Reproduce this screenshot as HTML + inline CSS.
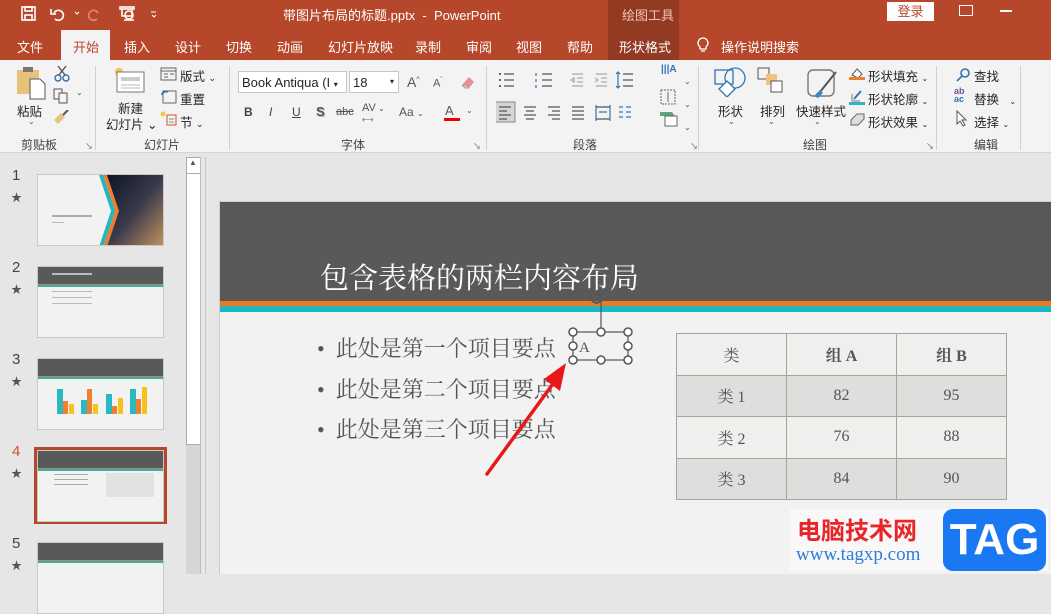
<!DOCTYPE html>
<html><head><meta charset="utf-8">
<style>
*{margin:0;padding:0;box-sizing:border-box}
body{width:1051px;height:574px;overflow:hidden;background:#E6E6E6;font-family:"Liberation Sans","Microsoft YaHei","Noto Sans CJK SC",sans-serif;position:relative;font-size:12px;color:#262626}
.a{position:absolute;white-space:nowrap}
.w{color:#fff}
.tab{position:absolute;top:37px;font-size:13px;color:#fff}
.rb{color:#262626;font-size:12.5px}
.gl{position:absolute;top:136px;font-size:12px;color:#444}
.sep{position:absolute;top:66px;width:1px;height:84px;background:#D0D0D0}
.ic{position:absolute}
.thumb{position:absolute;left:37px;width:127px;height:72px;background:#F2F2F2;border:1px solid #C8C8C8;overflow:hidden}
.th{position:absolute;left:0;top:0;width:100%;height:17px;background:#595959}
.to{position:absolute;left:0;top:17px;width:100%;height:1px;background:#E07A2C}
.tt{position:absolute;left:0;top:18px;width:100%;height:2px;background:#23B6C0}
.num{position:absolute;left:12px;font-size:15px;color:#444}
.star{position:absolute;left:11px;font-size:11px;color:#555}
table{border-collapse:collapse}
td{border:1px solid #A5A5A0;width:110px;height:41.5px;text-align:center;font-family:"Liberation Serif","Noto Serif CJK SC",serif;font-size:16px;color:#555}
</style></head><body>
<div class="a" style="left:0;top:0;width:1051px;height:60px;background:#B7472A"></div>
<div class="a" style="left:608px;top:0;width:71px;height:60px;background:#923A22"></div>
<div class="a" style="left:61px;top:30px;width:49px;height:30px;background:#F3F3F3"></div>
<svg class="ic" style="left:20px;top:5px" width="150" height="18" viewBox="0 0 150 18" fill="none" stroke="#fff" stroke-width="1.6">
<rect x="2" y="2" width="13" height="13"/><rect x="5" y="2" width="7" height="4"/><rect x="5" y="10" width="7" height="5"/>
<path d="M34 8a5 5 0 1 1 1 6"/><path d="M31 4v5h5"/><path d="M55 7l2 2 2-2" stroke-width="1"/>
<path d="M78 8a5 5 0 1 0 -1 6" stroke="#D98A72"/>
<rect x="100" y="2" width="14" height="2"/><path d="M102 4v7h10V4"/><circle cx="109" cy="10" r="4"/><path d="M104 15h10"/>
<path d="M131 7h5M132 10l2 2 2-2" stroke-width="1"/>
</svg>
<div class="a w" style="left:283px;top:5px;font-size:13px">带图片布局的标题.pptx&nbsp; - &nbsp;PowerPoint</div>
<div class="a" style="left:622px;top:5px;font-size:13px;color:#F2C4B4">绘图工具</div>
<div class="a" style="left:887px;top:2px;width:47px;height:19px;background:#fff;color:#B7472A;font-size:13px;text-align:center;line-height:19px">登录</div>
<div class="a" style="left:959px;top:5px;width:14px;height:11px;border:1.5px solid #fff"></div>
<div class="a" style="left:1000px;top:10px;width:12px;height:1.5px;background:#fff"></div>
<div class="tab" style="left:17px">文件</div>
<div class="tab" style="left:73px;color:#B7472A">开始</div>
<div class="tab" style="left:124px">插入</div>
<div class="tab" style="left:175px">设计</div>
<div class="tab" style="left:226px">切换</div>
<div class="tab" style="left:277px">动画</div>
<div class="tab" style="left:328px">幻灯片放映</div>
<div class="tab" style="left:415px">录制</div>
<div class="tab" style="left:466px">审阅</div>
<div class="tab" style="left:516px">视图</div>
<div class="tab" style="left:567px">帮助</div>
<div class="tab" style="left:619px">形状格式</div>
<svg class="ic" style="left:696px;top:36px" width="14" height="18" fill="none" stroke="#fff" stroke-width="1.3"><path d="M4 11a5 5 0 1 1 6 0v2H4z"/><path d="M5 15h4"/></svg>
<div class="tab" style="left:721px">操作说明搜索</div>
<div class="a" style="left:0;top:60px;width:1051px;height:93px;background:#F3F3F3;border-bottom:1px solid #D5D5D5"></div>
<div class="sep" style="left:95px"></div><div class="sep" style="left:229px"></div><div class="sep" style="left:486px"></div><div class="sep" style="left:698px"></div><div class="sep" style="left:936px"></div><div class="sep" style="left:1020px"></div>
<svg class="ic" style="left:16px;top:66px" width="30" height="34"><rect x="1" y="4" width="22" height="24" fill="#E8C27A"/><rect x="7" y="1" width="10" height="5" fill="#777"/><path d="M14 13h10l5 5v15H14z" fill="#fff" stroke="#555"/></svg>
<div class="a rb" style="left:17px;top:101px">粘贴</div>
<div class="a" style="left:28px;top:117px;font-size:8px;color:#555">⌄</div>
<svg class="ic" style="left:54px;top:65px" width="16" height="17" fill="none" stroke="#3A6FA8" stroke-width="1.4"><circle cx="4" cy="13" r="3"/><circle cx="12" cy="13" r="3"/><path d="M5 10L12 1M11 10L4 1" stroke="#555"/></svg>
<svg class="ic" style="left:53px;top:88px" width="16" height="16" fill="none" stroke="#555"><rect x="1" y="1" width="8" height="10"/><rect x="6" y="5" width="8" height="10" fill="#F3F3F3"/></svg>
<div class="a" style="left:76px;top:88px;font-size:8px;color:#555">⌄</div>
<svg class="ic" style="left:53px;top:110px" width="16" height="16"><path d="M1 10l7-7 4 4-7 7z" fill="#E8C27A"/><path d="M10 5l5-5" stroke="#555" stroke-width="2"/></svg>
<div class="gl" style="left:21px">剪贴板</div>
<div class="a" style="left:85px;top:141px;font-size:8px;color:#666">↘</div>
<svg class="ic" style="left:113px;top:66px" width="32" height="28"><circle cx="6" cy="6" r="4" fill="#F6C342"/><rect x="4" y="6" width="27" height="20" fill="#fff" stroke="#777"/><rect x="8" y="11" width="19" height="4" fill="#ccc"/><path d="M8 19h19M8 22h19" stroke="#bbb"/></svg>
<div class="a rb" style="left:118px;top:98px">新建</div>
<div class="a rb" style="left:106px;top:114px">幻灯片 ⌄</div>
<svg class="ic" style="left:160px;top:67px" width="17" height="14" fill="none" stroke="#666"><rect x="1" y="1" width="15" height="12"/><path d="M1 4h15M4 7h4M4 10h4M10 7h4"/></svg>
<div class="a rb" style="left:180px;top:66px">版式 <span style="font-size:9px">⌄</span></div>
<svg class="ic" style="left:160px;top:89px" width="17" height="15" fill="none" stroke="#666"><rect x="3" y="2" width="13" height="12"/><path d="M2 6a4 4 0 0 1 6-3" stroke="#2E75B6" stroke-width="2"/></svg>
<div class="a rb" style="left:180px;top:89px">重置</div>
<svg class="ic" style="left:160px;top:111px" width="17" height="15" fill="none"><circle cx="3" cy="3" r="2.5" fill="#F6C342"/><rect x="7" y="4" width="9" height="10" stroke="#D0502E"/><path d="M9 8h5M9 11h5" stroke="#888"/></svg>
<div class="a rb" style="left:180px;top:112px">节 <span style="font-size:9px">⌄</span></div>
<div class="gl" style="left:144px">幻灯片</div>
<div class="a" style="left:238px;top:71px;width:109px;height:22px;background:#fff;border:1px solid #C6C6C6;font-size:13px;padding:3px 3px">Book Antiqua (I <span style="font-size:8px">▾</span></div>
<div class="a" style="left:349px;top:71px;width:50px;height:22px;background:#fff;border:1px solid #C6C6C6;font-size:13px;padding:3px 3px">18<span style="position:absolute;right:4px;top:5px;font-size:8px">▾</span></div>
<div class="a" style="left:407px;top:74px;font-size:14px;color:#555">A<sup style="font-size:7px">^</sup></div>
<div class="a" style="left:433px;top:77px;font-size:11px;color:#555">A<sup style="font-size:7px">ˇ</sup></div>
<svg class="ic" style="left:459px;top:73px" width="18" height="18"><path d="M3 12l7-8 5 5-5 6z" fill="#E89098"/><path d="M3 12l3 3h4" stroke="#999" fill="none"/></svg>
<div class="a" style="left:244px;top:105px;font-size:12px;font-weight:bold;color:#444">B</div>
<div class="a" style="left:269px;top:105px;font-size:12px;font-style:italic;color:#444">I</div>
<div class="a" style="left:292px;top:105px;font-size:12px;text-decoration:underline;color:#444">U</div>
<div class="a" style="left:316px;top:104px;font-size:13px;font-weight:bold;color:#555;text-shadow:1px 1px #aaa">S</div>
<div class="a" style="left:336px;top:106px;font-size:11px;color:#555;text-decoration:line-through">abc</div>
<div class="a" style="left:362px;top:102px;font-size:11px;color:#555">AV<span style="font-size:8px"> ⌄</span></div>
<div class="a" style="left:362px;top:115px;font-size:8px;color:#2E75B6">⟷</div>
<div class="a" style="left:399px;top:105px;font-size:12px;color:#555">Aa <span style="font-size:8px">⌄</span></div>
<div class="a" style="left:445px;top:103px;font-size:13px;color:#555">A</div>
<div class="a" style="left:444px;top:118px;width:16px;height:3px;background:#E00"></div>
<div class="a" style="left:466px;top:106px;font-size:8px;color:#555">⌄</div>
<div class="gl" style="left:341px">字体</div>
<div class="a" style="left:473px;top:141px;font-size:8px;color:#666">↘</div>
<svg class="ic" style="left:496px;top:70px" width="190" height="60" fill="none" stroke="#555" stroke-width="1.2">
<path d="M8 4h10M8 10h10M8 16h10" /><path d="M3 4h2M3 10h2M3 16h2" stroke="#2E75B6" stroke-width="2"/>
<path d="M46 4h10M46 10h10M46 16h10"/><path d="M40 3v3M40 9v3M40 15v3" stroke="#2E75B6"/>
<path d="M76 4h11M81 8h6M81 12h6M76 16h11M75 10l3-2v4z" stroke="#aaa"/>
<path d="M100 4h11M105 8h6M105 12h6M100 16h11M99 8l3 2-3 2" stroke="#aaa"/>
<path d="M127 4h10M127 10h10M127 16h10"/><path d="M122 2v16M120 4l2-2 2 2M120 16l2 2 2-2" stroke="#2E75B6"/>
<rect x="-1" y="32" width="20" height="20" fill="#D4D4D4" stroke="#999"/>
<path d="M3 37h12M3 41h8M3 45h12M3 49h8"/>
<path d="M28 37h12M30 41h8M28 45h12M30 49h8"/>
<path d="M52 37h12M56 41h8M52 45h12M56 49h8"/>
<path d="M76 37h12M76 41h12M76 45h12M76 49h12"/>
<path d="M100 35v16M114 35v16M103 42h8" stroke="#2E75B6"/><path d="M100 37h14M100 49h14"/>
<path d="M123 37h4M123 42h4M123 47h4M130 37h5M130 42h5M130 47h5" stroke="#2E75B6"/>
</svg>
<div class="a" style="left:661px;top:64px;font-size:10px;color:#2E75B6;font-weight:bold">|||A</div>
<svg class="ic" style="left:659px;top:88px" width="20" height="42" fill="none" stroke="#666"><rect x="2" y="2" width="14" height="14" stroke-dasharray="2 1"/><path d="M9 4v10"/><path d="M1 24h12l3 4H1z" fill="#5FA37F" stroke="none"/><rect x="6" y="28" width="12" height="10" fill="#fff"/></svg>
<div class="a" style="left:684px;top:70px;font-size:8px;color:#555;line-height:23px">⌄<br>⌄<br>⌄</div>
<div class="gl" style="left:573px">段落</div>
<div class="a" style="left:690px;top:141px;font-size:8px;color:#666">↘</div>
<svg class="ic" style="left:713px;top:67px" width="36" height="30" fill="none" stroke="#2E75B6" stroke-width="1.3"><rect x="2" y="3" width="18" height="14"/><circle cx="22" cy="11" r="10" /><path d="M14 14l8 8-8 8-8-8z" fill="#fff"/></svg>
<div class="a rb" style="left:718px;top:101px">形状</div>
<svg class="ic" style="left:757px;top:67px" width="28" height="28" fill="none" stroke="#555"><rect x="1" y="1" width="11" height="11"/><rect x="9" y="7" width="11" height="11" fill="#ECC57A" stroke="none"/><rect x="14" y="14" width="11" height="11" fill="#fff"/></svg>
<div class="a rb" style="left:760px;top:101px">排列</div>
<svg class="ic" style="left:806px;top:68px" width="32" height="32" fill="none"><rect x="2" y="2" width="26" height="26" rx="5" stroke="#777" stroke-width="1.4"/><path d="M30 4L14 24" stroke="#555" stroke-width="2"/><path d="M8 28l6-6 3 3-5 5z" fill="#3A86C8"/></svg>
<div class="a rb" style="left:796px;top:101px">快速样式</div>
<div class="a" style="left:728px;top:117px;font-size:8px;color:#555">⌄</div>
<div class="a" style="left:768px;top:117px;font-size:8px;color:#555">⌄</div>
<div class="a" style="left:814px;top:117px;font-size:8px;color:#555">⌄</div>
<div class="a" style="left:849px;top:66px;width:16px;height:14px"><svg width="16" height="14"><path d="M3 9l5-6 5 5-4 4z" fill="#fff" stroke="#555"/><rect x="0" y="11" width="16" height="3" fill="#ED7D31"/></svg></div>
<div class="a rb" style="left:868px;top:66px">形状填充 <span style="font-size:8px">⌄</span></div>
<div class="a" style="left:849px;top:89px"><svg width="16" height="16"><path d="M3 12V5M3 12h8" stroke="#777" fill="none"/><path d="M5 10l7-8" stroke="#2E75B6" stroke-width="2"/><rect x="0" y="13" width="16" height="3" fill="#2BB7C0"/></svg></div>
<div class="a rb" style="left:868px;top:89px">形状轮廓 <span style="font-size:8px">⌄</span></div>
<div class="a" style="left:849px;top:112px"><svg width="16" height="14"><path d="M2 8l6-6h7v5l-6 6H2z" fill="#ddd" stroke="#666"/></svg></div>
<div class="a rb" style="left:868px;top:112px">形状效果 <span style="font-size:8px">⌄</span></div>
<div class="gl" style="left:803px">绘图</div>
<div class="a" style="left:926px;top:141px;font-size:8px;color:#666">↘</div>
<svg class="ic" style="left:955px;top:67px" width="16" height="16" fill="none" stroke="#2E75B6" stroke-width="1.6"><circle cx="10" cy="6" r="4"/><path d="M7 9l-5 5"/></svg>
<div class="a rb" style="left:974px;top:66px">查找</div>
<div class="a" style="left:954px;top:87px;font-size:9px;line-height:8px;color:#7B4FA0;font-weight:bold">ab<br><span style="color:#2E75B6">ac</span></div>
<div class="a rb" style="left:974px;top:89px">替换 &nbsp;&nbsp;<span style="font-size:8px">⌄</span></div>
<svg class="ic" style="left:956px;top:110px" width="12" height="17" fill="#fff" stroke="#555"><path d="M1 1v13l3-3 3 5 2-1-3-5h4z"/></svg>
<div class="a rb" style="left:974px;top:112px">选择 <span style="font-size:8px">⌄</span></div>
<div class="gl" style="left:974px">编辑</div>
<div class="a" style="left:186px;top:157px;width:15px;height:417px;background:#D6D6D6"></div>
<div class="a" style="left:186px;top:157px;width:15px;height:288px;background:#fff;border:1px solid #ABABAB"></div>
<div class="a" style="left:189px;top:158px;font-size:8px;color:#555">▲</div>
<div class="a" style="left:186px;top:173px;width:15px;height:1px;background:#ABABAB"></div>
<div class="a" style="left:205px;top:157px;width:1px;height:417px;background:#C8C8C8"></div>
<div class="a" style="left:200px;top:157px;width:1px;height:417px;background:#BDBDBD"></div>
<div class="num" style="top:167px">1</div><div class="star" style="top:189px">★</div>
<div class="thumb" style="top:174px;background:#F2F2F2">
<svg width="127" height="72" style="position:absolute;left:0;top:0"><defs><linearGradient id="g" x1="0" y1="0" x2="1" y2="1"><stop offset="0" stop-color="#0C1424"/><stop offset=".5" stop-color="#3A3A4C"/><stop offset="1" stop-color="#C8965E"/></linearGradient></defs><path d="M68 0h59v72H68l12-36z" fill="url(#g)"/><path d="M65 0h4l12 36-12 36h-4l12-36z" fill="#ED7D31"/><path d="M61 0h4l12 36-12 36h-4l12-36z" fill="#23B6C0"/><rect x="14" y="40" width="40" height="2" fill="#aaa"/><rect x="14" y="47" width="12" height="1" fill="#bbb"/></svg>
</div>
<div class="num" style="top:259px">2</div><div class="star" style="top:281px">★</div>
<div class="thumb" style="top:266px"><div class="th"></div><div class="to"></div><div class="tt"></div><div style="position:absolute;left:14px;top:6px;width:40px;height:2px;background:#bbb"></div><div style="position:absolute;left:14px;top:24px;width:40px;height:1px;background:#bbb;box-shadow:0 6px #bbb,0 12px #bbb"></div></div>
<div class="num" style="top:351px">3</div><div class="star" style="top:373px">★</div>
<div class="thumb" style="top:358px"><div class="th"></div><div class="to"></div><div class="tt"></div>
<svg width="127" height="72" style="position:absolute;left:0;top:0"><g><rect x="19" y="30" width="6" height="25" fill="#2BB7C0"/><rect x="25" y="42" width="5" height="13" fill="#F07F2E"/><rect x="31" y="45" width="5" height="10" fill="#F4C31E"/><rect x="43" y="41" width="6" height="14" fill="#2BB7C0"/><rect x="49" y="30" width="5" height="25" fill="#F07F2E"/><rect x="55" y="45" width="5" height="10" fill="#F4C31E"/><rect x="68" y="35" width="6" height="20" fill="#2BB7C0"/><rect x="74" y="47" width="5" height="8" fill="#F07F2E"/><rect x="80" y="39" width="5" height="16" fill="#F4C31E"/><rect x="92" y="30" width="6" height="25" fill="#2BB7C0"/><rect x="98" y="40" width="5" height="15" fill="#F07F2E"/><rect x="104" y="28" width="5" height="27" fill="#F4C31E"/></g></svg></div>
<div class="a" style="left:34px;top:447px;width:133px;height:77px;border:3px solid #B7472A"></div>
<div class="num" style="top:443px;color:#D0502E">4</div><div class="star" style="top:465px">★</div>
<div class="thumb" style="top:450px"><div class="th"></div><div class="to"></div><div class="tt"></div><div style="position:absolute;left:16px;top:23px;width:34px;height:1px;background:#aaa;box-shadow:0 5px #aaa,0 10px #aaa"></div><div style="position:absolute;left:68px;top:22px;width:48px;height:24px;background:#E2E2E0"></div></div>
<div class="num" style="top:535px">5</div><div class="star" style="top:557px">★</div>
<div class="thumb" style="top:542px"><div class="th"></div><div class="to"></div><div class="tt"></div></div>
<div class="a" style="left:219px;top:201px;width:832px;height:373px;background:#F2F2F2;border-left:1px solid #ccc;border-top:1px solid #ccc"></div>
<div class="a" style="left:220px;top:202px;width:831px;height:99px;background:#595959"></div>
<div class="a" style="left:220px;top:301px;width:831px;height:5px;background:#EB7B23"></div>
<div class="a" style="left:220px;top:306px;width:831px;height:6px;background:#1FB7C1"></div>
<div class="a" style="left:320px;top:256px;font-size:29px;color:#fff;font-family:'Liberation Serif','Noto Serif CJK SC',serif">包含表格的两栏内容布局</div>
<div class="a" style="left:317px;top:329px;font-size:22px;line-height:40.5px;color:#555;font-family:'Liberation Serif','Noto Serif CJK SC',serif">•&nbsp; 此处是第一个项目要点<br>•&nbsp; 此处是第二个项目要点<br>•&nbsp; 此处是第三个项目要点</div>
<svg class="ic" style="left:565px;top:288px" width="70" height="82" fill="none" stroke="#555" stroke-width="1.2">
<path d="M27 8a5 5 0 1 0 6 -3" stroke-width="2"/><path d="M32 2l2 4-4 1" stroke-width="1.5"/>
<path d="M36 13v31"/><rect x="8" y="44" width="55" height="28"/>
<g fill="#fff" stroke-width="1.5"><circle cx="8" cy="44" r="4"/><circle cx="36" cy="44" r="4"/><circle cx="63" cy="44" r="4"/><circle cx="8" cy="58" r="4"/><circle cx="63" cy="58" r="4"/><circle cx="8" cy="72" r="4"/><circle cx="36" cy="72" r="4"/><circle cx="63" cy="72" r="4"/></g>
<text x="14" y="64" font-family="Liberation Serif" font-size="15" fill="#555" stroke="none">A</text>
</svg>
<svg class="ic" style="left:480px;top:355px" width="100" height="125"><path d="M7 119L78 22" stroke="#E81818" stroke-width="3.5" stroke-linecap="round"/><path d="M86 8L64 24l16 12z" fill="#E81818"/></svg>
<table class="a" style="left:676px;top:333px">
<tr style="background:#EFEFED"><td>类</td><td><b>组 A</b></td><td><b>组 B</b></td></tr>
<tr style="background:#DEDEDC"><td>类 1</td><td>82</td><td>95</td></tr>
<tr style="background:#EFEFED"><td>类 2</td><td>76</td><td>88</td></tr>
<tr style="background:#DEDEDC"><td>类 3</td><td>84</td><td>90</td></tr>
</table>
<div class="a" style="left:790px;top:509px;width:258px;height:62px;background:#F8F8F8"></div>
<div class="a" style="left:797px;top:511px;font-size:24px;font-weight:bold;color:#E8262A;font-family:'Noto Sans CJK SC',sans-serif">电脑技术网</div>
<div class="a" style="left:796px;top:544px;font-size:19px;color:#2E7BDA;font-family:'Liberation Serif',serif">www.tagxp.com</div>
<div class="a" style="left:943px;top:509px;width:103px;height:62px;background:#1A78F2;border-radius:10px;color:#fff;font-size:44px;font-weight:bold;text-align:center;line-height:62px">TAG</div>
</body></html>
